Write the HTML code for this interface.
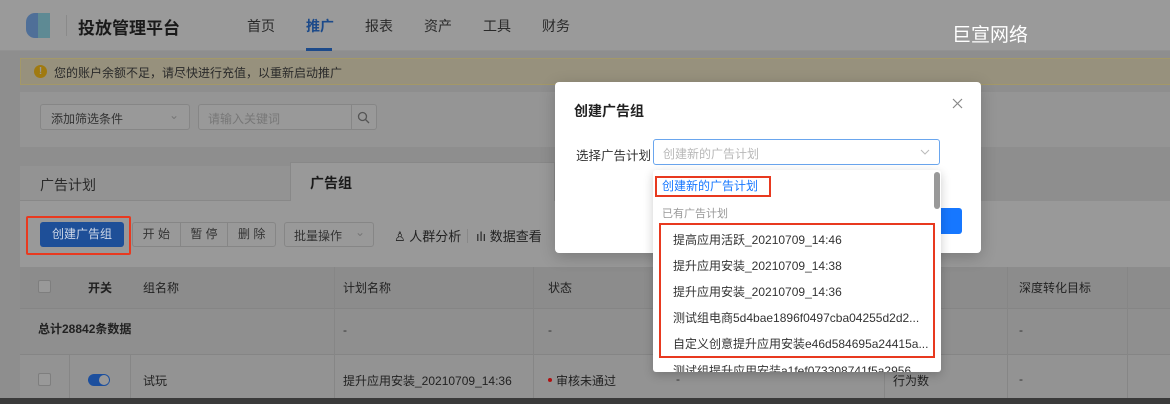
<!DOCTYPE html>
<html><head><meta charset="utf-8"><style>
*{margin:0;padding:0;box-sizing:border-box}
body{width:1170px;height:404px;overflow:hidden;background:#8e8e8e;font-family:"Liberation Sans","Noto Sans CJK SC",sans-serif;position:relative;color:#1e1e1e}
.a{position:absolute;white-space:nowrap}
.t13{font-size:13px}
.t12{font-size:12px}
</style></head><body>
<!-- header -->
<div class="a" style="left:0;top:0;width:1170px;height:51px;background:#9a9a9a;border-bottom:1px solid #929292"></div>
<div class="a" style="left:26px;top:13px;width:24px;height:25px;border-radius:9px 0 0 9px;background:linear-gradient(90deg,#4f6f98 0 50%,#5e8a94 50%)"></div>
<div class="a" style="left:66px;top:15px;width:1px;height:21px;background:#8a8a8a"></div>
<div class="a" style="left:78px;top:14px;font-size:17px;font-weight:bold;color:#1a1a1a">投放管理平台</div>
<div class="a" style="left:247px;top:16px;font-size:14px;color:#2a2a2a">首页</div>
<div class="a" style="left:306px;top:16px;font-size:14px;color:#1c4a8a;font-weight:bold">推广</div>
<div class="a" style="left:306px;top:48px;width:26px;height:3px;background:#1c4a8a"></div>
<div class="a" style="left:365px;top:16px;font-size:14px;color:#2a2a2a">报表</div>
<div class="a" style="left:424px;top:16px;font-size:14px;color:#2a2a2a">资产</div>
<div class="a" style="left:483px;top:16px;font-size:14px;color:#2a2a2a">工具</div>
<div class="a" style="left:542px;top:16px;font-size:14px;color:#2a2a2a">财务</div>
<div class="a" style="left:952px;top:20px;font-size:19px;color:#fff">巨宣网络</div>
<!-- warn bar -->
<div class="a" style="left:20px;top:58px;width:1160px;height:27px;background:#97917d;border:1px solid #a39868"></div>
<div class="a" style="left:34px;top:65px;width:13px;height:13px;border-radius:50%;background:#a07a10;color:#999;font-size:10px;line-height:13px;text-align:center;font-weight:bold">!</div>
<div class="a t12" style="left:54px;top:64px;color:#2a2a2a">您的账户余额不足，请尽快进行充值，以重新启动推广</div>
<!-- filter -->
<div class="a" style="left:20px;top:92px;width:1160px;height:55px;background:#959595"></div>
<div class="a t12" style="left:40px;top:104px;width:150px;height:26px;border:1px solid #868686;border-radius:3px;background:#999;padding:5px 10px;color:#333">添加筛选条件<span style="position:absolute;right:10px;top:3px;color:#777">⌄</span></div>
<div class="a t12" style="left:198px;top:104px;width:179px;height:26px;border:1px solid #868686;border-radius:3px;background:#999;padding:5px 9px;color:#777">请输入关键词</div>
<div class="a" style="left:351px;top:104px;width:26px;height:26px;border-left:1px solid #868686"></div>
<svg class="a" style="left:357px;top:111px" width="13" height="13" viewBox="0 0 13 13"><circle cx="5.5" cy="5.5" r="4" fill="none" stroke="#555" stroke-width="1.3"/><path d="M8.5 8.5L12 12" stroke="#555" stroke-width="1.3"/></svg>
<!-- tabs -->
<div class="a" style="left:20px;top:166px;width:270px;height:35px;background:#939393;border-bottom:1px solid #888"></div>
<div class="a" style="left:40px;top:175px;font-size:14px;color:#2a2a2a">广告计划</div>
<div class="a" style="left:290px;top:162px;width:265px;height:39px;background:#999;border:1px solid #888;border-bottom:none"></div>
<div class="a" style="left:310px;top:173px;font-size:14px;font-weight:bold;color:#1a1a1a">广告组</div>
<div class="a" style="left:20px;top:201px;width:1160px;height:66px;background:#999"></div>
<!-- toolbar -->
<div class="a" style="left:26px;top:216px;width:105px;height:39px;border:2px solid #e8391f;border-radius:2px"></div>
<div class="a t12" style="left:40px;top:222px;width:84px;height:25px;background:#1e4f98;color:#cfd8e8;border-radius:3px;text-align:center;line-height:25px">创建广告组</div>
<div class="a t12" style="left:132px;top:222px;width:144px;height:25px;border:1px solid #868686;border-radius:3px;background:#999;color:#333;display:flex">
<span style="flex:1;text-align:center;line-height:23px;border-right:1px solid #868686">开 始</span><span style="flex:1;text-align:center;line-height:23px;border-right:1px solid #868686">暂 停</span><span style="flex:1;text-align:center;line-height:23px">删 除</span></div>
<div class="a t12" style="left:284px;top:222px;width:90px;height:25px;border:1px solid #868686;border-radius:3px;background:#999;color:#333;padding:4px 9px">批量操作<span style="position:absolute;right:8px;top:2px;color:#777">⌄</span></div>
<div class="a t13" style="left:394px;top:226px;color:#222">♙ 人群分析</div>
<div class="a" style="left:467px;top:229px;width:1px;height:14px;background:#888"></div>
<div class="a t13" style="left:476px;top:226px;color:#222">ılı 数据查看</div>
<!-- table -->
<div class="a" style="left:20px;top:267px;width:1160px;height:42px;background:#8c8c8c;border-bottom:1px solid #858585"></div>
<div class="a" style="left:20px;top:309px;width:1160px;height:46px;background:#8f8f8f;border-bottom:1px solid #858585"></div>
<div class="a" style="left:20px;top:355px;width:1160px;height:43px;background:#939393"></div>
<div class="a" style="left:69px;top:355px;width:1px;height:43px;background:#868686"></div>
<div class="a" style="left:130px;top:355px;width:1px;height:43px;background:#868686"></div>
<div class="a" style="left:334px;top:267px;width:1px;height:131px;background:#868686"></div>
<div class="a" style="left:533px;top:267px;width:1px;height:131px;background:#868686"></div>
<div class="a" style="left:884px;top:267px;width:1px;height:131px;background:#868686"></div>
<div class="a" style="left:1007px;top:267px;width:1px;height:131px;background:#868686"></div>
<div class="a" style="left:1127px;top:267px;width:1px;height:131px;background:#868686"></div>
<div class="a" style="left:38px;top:280px;width:13px;height:13px;border:1px solid #7e7e7e;border-radius:2px;background:#999"></div>
<div class="a t12" style="left:88px;top:279px;font-weight:bold;color:#222">开关</div>
<div class="a t12" style="left:143px;top:279px;color:#222">组名称</div>
<div class="a t12" style="left:343px;top:279px;color:#222">计划名称</div>
<div class="a t12" style="left:548px;top:279px;color:#222">状态</div>
<div class="a t12" style="left:1019px;top:279px;color:#222">深度转化目标</div>
<div class="a t12" style="left:38px;top:320px;font-weight:bold;color:#222">总计28842条数据</div>
<div class="a t12" style="left:343px;top:323px;color:#333">-</div>
<div class="a t12" style="left:548px;top:323px;color:#333">-</div>
<div class="a t12" style="left:1019px;top:323px;color:#333">-</div>
<div class="a" style="left:38px;top:373px;width:13px;height:13px;border:1px solid #7e7e7e;border-radius:2px;background:#999"></div>
<div class="a" style="left:88px;top:374px;width:22px;height:12px;border-radius:6px;background:#1c4f9e"></div>
<div class="a" style="left:99px;top:375px;width:10px;height:10px;border-radius:50%;background:#999"></div>
<div class="a t12" style="left:143px;top:372px;color:#222">试玩</div>
<div class="a t12" style="left:343px;top:372px;color:#222">提升应用安装_20210709_14:36</div>
<div class="a" style="left:548px;top:378px;width:4px;height:4px;border-radius:50%;background:#b01010"></div>
<div class="a t12" style="left:556px;top:372px;color:#222">审核未通过</div>
<div class="a t12" style="left:676px;top:372px;color:#333">-</div>
<div class="a t12" style="left:893px;top:372px;color:#222">行为数</div>
<div class="a t12" style="left:1019px;top:372px;color:#333">-</div>
<div class="a" style="left:0;top:398px;width:1170px;height:6px;background:#3a3a3a"></div>
<!-- modal -->
<div class="a" style="left:555px;top:82px;width:426px;height:171px;background:#fff;border-radius:4px;box-shadow:0 4px 16px rgba(0,0,0,.2)"></div>
<div class="a" style="left:574px;top:101px;font-size:14px;font-weight:bold;color:#222">创建广告组</div>
<svg class="a" style="left:952px;top:98px" width="11" height="11" viewBox="0 0 11 11"><path d="M1 1L10 10M10 1L1 10" stroke="#888" stroke-width="1.2"/></svg>
<div class="a" style="left:576px;top:145px;font-size:12.5px;color:#333">选择广告计划</div>
<div class="a t12" style="left:653px;top:139px;width:287px;height:26px;border:1px solid #6aa6ee;border-radius:3px;padding:5px 9px;color:#b8b8b8">创建新的广告计划</div>
<svg class="a" style="left:920px;top:149px" width="10" height="6" viewBox="0 0 10 6"><path d="M1 1L5 5L9 1" fill="none" stroke="#bbb" stroke-width="1"/></svg>
<div class="a" style="left:938px;top:208px;width:24px;height:26px;background:#1677ff;border-radius:3px"></div>
<!-- dropdown -->
<div class="a" style="left:653px;top:170px;width:288px;height:202px;background:#fff;border-radius:3px;box-shadow:0 3px 10px rgba(0,0,0,.2);overflow:hidden">
<div class="a" style="left:281px;top:2px;width:6px;height:37px;border-radius:3px;background:#999"></div>
<div class="a t12" style="left:9px;top:7px;color:#1677ff">创建新的广告计划</div>
<div class="a" style="left:2px;top:6px;width:116px;height:21px;border:2px solid #e8391f"></div>
<div class="a" style="left:9px;top:35px;font-size:11px;color:#999">已有广告计划</div>
<div class="a" style="left:6px;top:53px;width:276px;height:135px;border:2px solid #e8391f"></div>
<div class="a t12" style="left:20px;top:61px;color:#333">提高应用活跃_20210709_14:46</div>
<div class="a t12" style="left:20px;top:87px;color:#333">提升应用安装_20210709_14:38</div>
<div class="a t12" style="left:20px;top:113px;color:#333">提升应用安装_20210709_14:36</div>
<div class="a t12" style="left:20px;top:139px;color:#333">测试组电商5d4bae1896f0497cba04255d2d2...</div>
<div class="a t12" style="left:20px;top:165px;color:#333">自定义创意提升应用安装e46d584695a24415a...</div>
<div class="a t12" style="left:20px;top:192px;color:#333">测试组提升应用安装a1fef073308741f5a2956</div>
</div>
</body></html>
